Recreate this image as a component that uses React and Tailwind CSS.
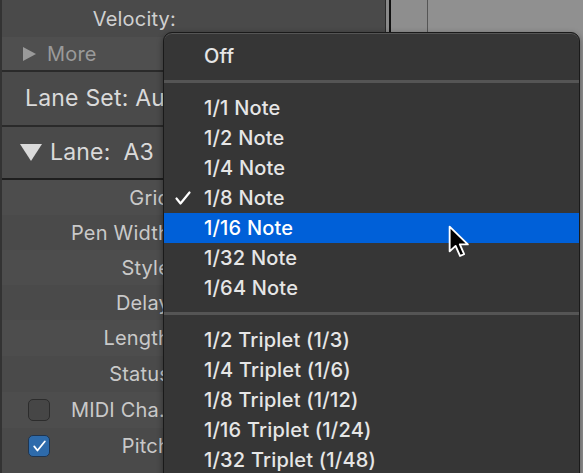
import React from 'react';

const noteItems = ['1/1 Note', '1/2 Note', '1/4 Note', '1/8 Note', '1/16 Note', '1/32 Note', '1/64 Note'];
const tripletItems = ['1/2 Triplet (1/3)', '1/4 Triplet (1/6)', '1/8 Triplet (1/12)', '1/16 Triplet (1/24)', '1/32 Triplet (1/48)'];

const laneRows = [
  { label: 'Grid', h: 'h-[35px]', bg: 'bg-[#4d4d4d]' },
  { label: 'Pen Width', h: 'h-[35px]', bg: 'bg-[#4a4a4a]' },
  { label: 'Style', h: 'h-[35px]', bg: 'bg-[#4d4d4d]' },
  { label: 'Delay', h: 'h-[35px]', bg: 'bg-[#4a4a4a]' },
  { label: 'Length', h: 'h-[36px]', bg: 'bg-[#4d4d4d]' },
  { label: 'Status', h: 'h-[36px]', bg: 'bg-[#4a4a4a]' },
  { label: 'MIDI Cha.', h: 'h-[36px]', bg: 'bg-[#4d4d4d]', box: 'off', pad: 'pr-[5px]' },
  { label: 'Pitch', h: 'h-[36px]', bg: 'bg-[#4a4a4a]', box: 'on' },
];

const CheckIcon = ({ className }) => (
  <svg className={className} viewBox="0 0 16 14" fill="none" stroke="currentColor" strokeWidth="2.2" strokeLinecap="round" strokeLinejoin="round">
    <polyline points="1.5,7.5 5.5,12.5 14.5,1.5" />
  </svg>
);

const Separator = () => (
  <div className="pt-[9px] pb-[10px]">
    <div className="h-[3px] bg-[#555555]" />
  </div>
);

const MenuItem = ({ label, checked, active }) => (
  <div className={`relative flex h-[30px] items-center pl-[40px] ${active ? 'bg-[#0060d8] text-white' : 'text-[#e6e6e6]'}`}>
    {checked && <CheckIcon className="absolute left-[11px] top-[8px] h-[14px] w-[16px] text-white" />}
    {label}
  </div>
);

export default function App() {
  return (
    <div className="relative h-[473px] w-[583px] overflow-hidden bg-[#8c8c8c] font-['Inter','Liberation_Sans',sans-serif]">
      <div className="flex h-full">
        {/* inspector panel */}
        <div className="flex w-[385px] shrink-0 flex-col border-l-2 border-[#333333] bg-[#4a4a4a] text-[20px] tracking-[0.2px] text-[#c9c9c9]">
          <div className="flex h-[37px] items-center">
            <span className="w-[174px] text-right text-[#d0d0d0]">Velocity:</span>
          </div>
          <div className="flex h-[33px] items-center gap-[11px] bg-[#4f4f4f] pl-[21px] text-[#9a9a9a]">
            <svg className="h-[14px] w-[13px]" viewBox="0 0 13 14">
              <path d="M0 0 L13 7 L0 14 Z" fill="#9a9a9a" />
            </svg>
            <span>More</span>
          </div>
          <div className="h-[2px] bg-[#2a2a2a]" />
          <div className="flex h-[53px] items-center pl-[23px] text-[23px] text-[#dadada]">Lane Set: Auto Define</div>
          <div className="h-[2px] bg-[#2a2a2a]" />
          <div className="flex h-[51px] items-center pl-[18px] text-[23px] text-[#dadada]">
            <svg className="mr-[8px] h-[17px] w-[22px]" viewBox="0 0 22 17">
              <path d="M0 0 L22 0 L11 17 Z" fill="#dadada" />
            </svg>
            <span className="mr-[13px]">Lane:</span>
            <span>A3</span>
          </div>
          <div className="h-[2px] bg-[#1e1e1e]" />
          {laneRows.map((row) => (
            <div key={row.label} className={`flex items-center ${row.h} ${row.bg}`}>
              <div className={`flex w-[168px] items-center pl-[26px] ${row.pad || ''}`}>
                {row.box === 'off' && (
                  <div className="h-[22px] w-[22px] shrink-0 rounded-[5px] border border-[#2c2c2c] bg-[#464646]" />
                )}
                {row.box === 'on' && (
                  <div className="flex h-[22px] w-[22px] shrink-0 items-center justify-center rounded-[5px] border border-[#1f3550] bg-[#2e6bab]">
                    <CheckIcon className="h-[12px] w-[13px] text-white" />
                  </div>
                )}
                <span className="flex-1 whitespace-nowrap text-right">{row.label}</span>
              </div>
            </div>
          ))}
        </div>
        {/* track area */}
        <div className="flex flex-1">
          <div className="w-[1px] bg-[#2a2a2a]" />
          <div className="w-[3px] bg-[#8a8a8a]" />
          <div className="w-[2px] bg-[#111111]" />
          <div className="w-[36px] bg-[#8e8e8e]" />
          <div className="w-[1px] bg-[#555555]" />
          <div className="flex-1 bg-[#909090]" />
        </div>
      </div>

      {/* popup menu */}
      <div className="absolute left-[163px] top-[32px] w-[417px] rounded-[9px] border border-[#1a1a1a] bg-[#363636] pt-[8px] text-[20px] font-medium tracking-[0.2px] shadow-[inset_0_1px_0_#555555,0_2px_6px_rgba(0,0,0,0.4)]">
        <MenuItem label="Off" />
        <Separator />
        {noteItems.map((item) => (
          <MenuItem key={item} label={item} checked={item === '1/8 Note'} active={item === '1/16 Note'} />
        ))}
        <Separator />
        {tripletItems.map((item) => (
          <MenuItem key={item} label={item} />
        ))}
        <div className="h-[40px]" />
      </div>

      {/* mouse pointer */}
      <svg className="absolute left-[447px] top-[225px] h-[34px] w-[24px]" viewBox="0 0 14 20">
        <path d="M1.5 1 L1.5 15.5 L5 12.3 L7.6 18.2 L10 17.2 L7.5 11.4 L12.2 11.4 Z" fill="#000000" stroke="#ffffff" strokeWidth="1.1" strokeLinejoin="round" />
      </svg>
    </div>
  );
}
